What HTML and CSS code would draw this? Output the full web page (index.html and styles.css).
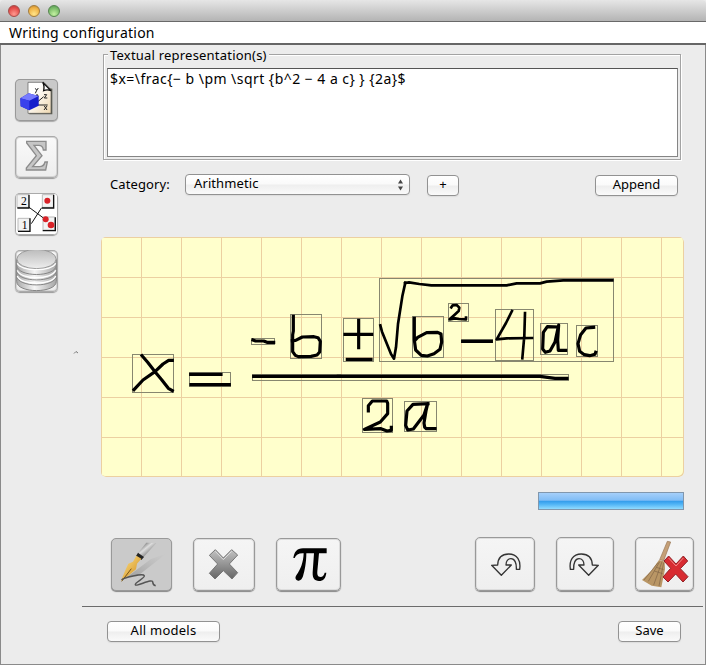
FILE: index.html
```html
<!DOCTYPE html>
<html lang="en">
<head>
<meta charset="utf-8">
<title>Writing configuration</title>
<link rel="stylesheet" href="styles.css">
</head>
<body>
<div class="window">
  <header class="titlebar"><i class="light red"></i><i class="light amber"></i><i class="light green"></i></header>
  <nav class="menubar"><span class="t-menu">Writing configuration</span></nav>
  <div class="content">
    <aside class="sidebar">
      <button class="side active" aria-label="Formula">
        <svg width="43" height="42" viewBox="0 0 129 126">
          <defs><linearGradient id="paper" x1="0" y1="0" x2="1" y2="1"><stop offset=".3" stop-color="#fff"/><stop offset="1" stop-color="#efd8b0"/></linearGradient></defs>
          <path d="M43 16v90h69V29" fill="#443" opacity=".8"/>
          <path d="M39 10h48l21 22v71H39z" fill="url(#paper)" stroke="#555" stroke-width="2"/>
          <path d="M83 10c5 8 5 15 3 25 7-3 14-3 22 0z" fill="#fff" stroke="#111" stroke-width="4"/>
          <path d="M66 78V48m0 30h32M66 70l20-17m-23-1 3-6 4 6M61 28l4 6 5-7m-5 7-4 9M87 47h8l-7 10h9M88 81l8 12m0-12-9 12" fill="none" stroke="#222" stroke-width="3"/>
          <path d="M16 58l25-15 30 8v29L43 94 17 82z" fill="#171ecb"/><path d="M16 58l25-15 30 8-28 14z" fill="#777bff"/><path d="M16 58l27 7v29L17 82z" fill="#3941ec"/>
        </svg>
      </button>
      <button class="side" aria-label="Sum">
        <svg width="43" height="42" viewBox="0 0 129 126"><path d="M35 16h58v26h-8c-1-10-5-14-14-14H57l24 31-28 33h20c10 0 15-5 17-14h7l-5 24H34v-6l30-37-29-38z" fill="#c6c6c6" stroke="#8c8c8c" stroke-width="4"/></svg>
      </button>
      <button class="side" aria-label="Matching">
        <svg width="43" height="42" viewBox="0 0 129 126">
          <rect x="3" y="3" width="123" height="120" rx="9" fill="#fff"/>
          <g fill="#f3f3f3" stroke="#bbb" stroke-width="3"><path d="M6 5h35v38H6zM9 76h35v38H9zM82 5h33v38H82zM84 72h35v39H84z"/></g>
          <g fill="none" stroke="#111" stroke-width="4"><path d="M42 5v40H7m38 31v39H9M116 5v40H81m40 28v40H83"/></g>
          <path d="M41 42l43 32M49 92l31-48" stroke="#111" stroke-width="3"/>
          <g fill="#d92228"><circle cx="97" cy="23" r="9"/><circle cx="92" cy="79" r="9"/><circle cx="108" cy="96" r="10"/></g>
          <text x="18" y="37" class="digit">2</text><text x="20" y="107" class="digit">1</text>
        </svg>
      </button>
      <button class="side" aria-label="Database">
        <svg width="43" height="42" viewBox="0 0 129 126">
          <defs><linearGradient id="disk" x1="0" x2="1"><stop stop-color="#aaa"/><stop offset=".45" stop-color="#f5f5f5"/><stop offset="1" stop-color="#a6a6a6"/></linearGradient>
          <linearGradient id="lid" x1="0" y1="0" x2="0" y2="1"><stop stop-color="#bbb"/><stop offset="1" stop-color="#eee"/></linearGradient></defs>
          <g fill="url(#disk)" stroke="#858585" stroke-width="3"><path d="M5 72v22c0 37 119 37 119 0V72z"/><path d="M5 55v22c0 37 119 37 119 0V55z"/><path d="M5 40v22c0 37 119 37 119 0V40z"/><path d="M5 28v17c0 38 119 38 119 0V28z"/></g>
          <ellipse cx="64.500" cy="27" rx="59" ry="29" fill="url(#lid)" stroke="#999" stroke-width="3"/>
          <path d="M7 40c9 25 105 25 115 0M7 61c9 29 105 29 115 0M7 78c9 29 105 29 115 0" fill="none" stroke="#fff" stroke-width="4"/>
        </svg>
      </button>
      <svg class="collapse" width="6" height="5" viewBox="0 0 6 5"><path d="M1 3.500l2-2 2 1.500" fill="none" stroke="#777"/></svg>
    </aside>
    <main class="main">
      <section class="group">
        <h2 class="legend"><span class="t-legend">Textual representation(s)</span></h2>
        <div class="source"><span class="t-source">$x=\frac{− b \pm \sqrt {b^2 − 4 a c} } {2a}$</span></div>
      </section>
      <div class="category">
        <label>Category:</label>
        <button class="select"><span class="t-arith">Arithmetic</span><svg width="7" height="12" viewBox="0 0 7 12"><path d="M1 4.500 3.500.500 6 4.500zM1 7.500l2.500 4 2.500-4z" fill="#444"/></svg></button>
        <button class="push plus">+</button>
        <button class="push append"><span>Append</span></button>
      </div>
      <div class="paper">
        <svg width="583" height="240" viewBox="101 237 583 240">
          <g fill="none" stroke="#87876f" stroke-width="1">
            <rect x="132.500" y="354.500" width="41" height="38"/><rect x="189.500" y="372.500" width="41" height="14"/><rect x="251.500" y="338.500" width="23" height="6"/><rect x="290.500" y="314.500" width="31" height="44"/><rect x="343.500" y="318.500" width="30" height="43"/><rect x="379.500" y="278.500" width="234" height="83"/><rect x="412.500" y="316.500" width="31" height="41"/><rect x="448.500" y="303.500" width="20" height="18"/><rect x="461.500" y="339.500" width="31" height="3"/><rect x="495.500" y="309.500" width="38" height="51"/><rect x="540.500" y="323.500" width="27" height="31"/><rect x="576.500" y="325.500" width="21" height="31"/><rect x="252.500" y="374.500" width="316" height="6"/><rect x="362.500" y="398.500" width="30" height="34"/><rect x="404.500" y="401.500" width="32" height="30"/>
          </g>
          <g class="ink" transform="translate(95 230) scale(.33333)">
            <path d="M141 377l17 20 22 28 20 24 20 26 12 7M117 479l27-29 36-25 24-23 17-11h11"/>
            <path d="M287 433h91M288 464h115M474 330l8 3h24l10 4h20M476 439h259"/>
            <path d="M595 259v44l-2 11v51l8 11 9 4 38-1 18-4 8-9 2-32-7-11-12-3-35 1-20 10-10 1"/>
          </g>
          <g class="ink" transform="translate(340 260) scale(.33333)">
            <path d="M56 181v82M15 223h80M22 298h71"/>
            <path class="thin" d="M121 196l5 19 27 67 9 14 6-34 6-70 13-83 9-41"/>
            <path class="thin" d="M195 69l12-2 31 5 36 4H500l30-6h70l20-5 50-4h147"/>
            <path d="M223 175v65l4 30 17 16 18 2 20-7 18-13 5-22-2-24-10-5-33 1-27 14-8 9"/>
            <path class="thin" d="M334 142l4-6 12-1 8 8-2 10-12 11-15 14 16-3 12 2 21 1v-5"/>
            <path d="M368 244h86M-5 349H600l45 6h36"/>
            <path class="thin" d="M516 153l-18 36-28 49 30-3 76-1M555 159l-2 68-6 68"/>
            <path d="M655 201l-33-1-12 17-2 50 8 10 14-4 15-27 11-51-3 45 2 31h22"/>
            <path d="M761 202l-23 2-16 20-8 27 5 23 14 10 16 3 16-4 2-6"/>
            <path d="M85 453v-16l12-14h43l3 7v31l-22 25-48 22 50-2 18 7 13-2v-9"/>
            <path d="M264 431l-45 2-18 20-4 43 6 14 17-3 32-42 11-34-5 22-6 36 2 13 5 4h26"/>
          </g>
        </svg>
      </div>
      <div class="progress"></div>
      <div class="tools">
        <button class="tool pen active" aria-label="Write">
          <svg width="60" height="52" viewBox="0 0 180 156">
            <defs><linearGradient id="barrel" x1="0" y1="0" x2="1" y2="1"><stop stop-color="#222"/><stop offset=".4" stop-color="#ddd"/><stop offset="1" stop-color="#222"/></linearGradient><linearGradient id="nib" x1="0" y1="0" x2="1" y2="1"><stop stop-color="#ffe58b"/><stop offset="1" stop-color="#ce8818"/></linearGradient><linearGradient id="fade" x1="0" y1="1" x2="1" y2="0"><stop stop-color="#888" stop-opacity=".7"/><stop offset="1" stop-color="#aaa" stop-opacity="0"/></linearGradient></defs>
            <path d="M42 116l75-56 45-16-80 63z" fill="url(#fade)"/>
            <path d="M78 42l25-31 30 1-40 44z" fill="url(#barrel)"/>
            <path d="M78 41l-6 10 16 12 8-9z" fill="#252525"/><path d="M73 50l-10 18-14 6-10 22-12 29 21-14 24-20 3-17 13-15z" fill="url(#nib)"/><path d="M29 127l29-38" stroke="#765318" stroke-width="3"/>
            <path d="M29 123c4-7 65-21 68-13 3 7-29 20-27 27 2 6 30-9 44-11 16-2 1 10 17 14" fill="none" stroke="#555" stroke-width="4.500"/>
          </svg>
        </button>
        <button class="tool remove" aria-label="Delete">
          <svg width="60" height="52" viewBox="0 0 180 156"><defs><linearGradient id="steel" x1="0" y1="0" x2="0" y2="1"><stop stop-color="#c2c2c2"/><stop offset="1" stop-color="#666"/></linearGradient></defs><path d="M64 32l24 25 25-25 18 16-25 27 25 26-17 19-26-25-25 25-17-17 25-28-25-26z" fill="url(#steel)" stroke="#777" stroke-width="3" stroke-linejoin="round"/><path d="M64 37l24 25 25-25" fill="none" stroke="#ddd" stroke-width="3"/></svg>
        </button>
        <button class="tool pi" aria-label="Pi">
          <svg width="62" height="52" viewBox="0 0 186 156"><path d="M46 57c3-17 10-29 29-29h71v15h-23l-5 54c-1 12 2 17 9 17 8 0 11-6 13-13h5c-2 17-9 25-22 25-14 0-20-9-19-26l4-57H85c0 27-5 53-10 69-3 9-8 14-15 13-7-1-10-9-5-16 13-18 21-39 22-66-14-1-23 4-27 14z" fill="#000"/></svg>
        </button>
        <button class="tool undo" aria-label="Undo">
          <svg width="58" height="53" viewBox="0 0 174 159"><path id="turn" d="M47 82l18-1c1-23 13-33 33-33 26 0 37 20 33 46h-10c1-19-5-32-16-32-9 0-15 8-15 19h16L76 112z" fill="#eee" stroke="#333" stroke-width="4" stroke-linejoin="round"/></svg>
        </button>
        <button class="tool redo" aria-label="Redo">
          <svg width="56" height="53" viewBox="0 0 168 159"><use href="#turn" transform="translate(171 0) scale(-1 1)"/></svg>
        </button>
        <button class="tool clear" aria-label="Clear">
          <svg width="57" height="53" viewBox="0 0 171 159">
            <path d="M94 10l10 2-21 56-12-3z" fill="#c5a077" stroke="#987554" stroke-width="2"/><path d="M69 66l17 5 1 23-11 54-29-5-29-17 28-28z" fill="#b99665"/><path d="M71 71l-34 59m41-59-25 70m30-67-14 70M66 74l-42 52M61 88l22 7m-28 4 25 8" stroke="#806345" stroke-width="2" fill="none"/>
            <path d="M98 54l22 24 22-24 13 15-22 23 23 24-15 16-22-24-23 24-15-15 23-26-20-22z" fill="#d82b31" stroke="#912024" stroke-width="3" stroke-linejoin="round"/><path d="M98 60l22 24 22-24" fill="none" stroke="#f18a8a" stroke-width="3"/>
          </svg>
        </button>
      </div>
      <footer class="footer"><button class="push models"><span>All models</span></button><button class="push save"><span>Save</span></button></footer>
    </main>
  </div>
</div>
</body>
</html>
```
FILE: styles.css
```css
* { box-sizing: border-box; }
body { margin: 0; background: #fff; font: 13px/18px "Noto Sans", sans-serif; color: #000; }
button { appearance: none; padding: 0; margin: 0; font: inherit; color: #000; }
svg { display: block; flex: none; }
.window { width: 706px; height: 665px; display: flex; flex-direction: column; background: #ececec; overflow: hidden; }
.titlebar { height: 22px; display: flex; gap: 8px; padding: 5px 8px; background: linear-gradient(#e6e6e6, #b4b4b4); border-bottom: 1px solid #696969; border-radius: 4px 4px 0 0; flex: none; }
.light { width: 12px; height: 12px; border-radius: 50%; border: 1px solid #777; }
.red { background: radial-gradient(circle at 50% 80%, #ff9a90, #e34b48 65%, #b63c3b); border-color: #a54d4a; }
.amber { background: radial-gradient(circle at 50% 80%, #ffe58a, #eeb043 65%, #bd812c); border-color: #a37c3d; }
.green { background: radial-gradient(circle at 50% 80%, #c4f1a2, #78ba67 65%, #519252); border-color: #56854f; }
.menubar { height: 23px; flex: none; background: #fff; border-bottom: 2px solid #666; padding: 2px 0 0 9px; font-size: 14px; letter-spacing: .25px; }
.content { flex: 1; min-height: 0; display: flex; border: solid #8a8a8a; border-width: 0 1px 1px; }
.sidebar { width: 81px; padding: 34px 0 0 14px; display: flex; flex-direction: column; gap: 15px; }
.side { width: 43px; height: 42px; border: 0; border-radius: 5px; overflow: hidden; background: linear-gradient(#fafafa, #ededed); box-shadow: inset 0 0 0 1px #aaa, inset 0 0 0 2px #d5d5d5, 0 1px 1px #999; flex: none; }
.side.active { background: #c9c9c9; box-shadow: inset 0 0 0 1px #999, 0 1px 1px #aaa; }
.digit { font: 35px "Liberation Serif", serif; }
.collapse { margin: 43px 0 0 58px; }
.main { flex: 1; display: flex; flex-direction: column; min-width: 0; }
.group { margin: 9px 0 0 21px; width: 578px; height: 106px; border: 1px solid #a3a3a3; box-shadow: 1px 1px #fff, inset 1px 1px #fff; padding: 0 2px 2px 3px; display: flex; flex-direction: column; }
.legend { align-self: flex-start; margin: -9px 0 0 1px; padding: 0 2px; height: 22px; background: #ececec; font-weight: 400; font-size: 13px; line-height: 18px; letter-spacing: .21px; }
.source { height: 89px; border: 1px solid #858585; border-top-color: #555; background: #fff; padding: 1px 2px; font-size: 14px; letter-spacing: .46px; white-space: pre; }
.category { display: flex; align-items: flex-start; height: 77px; padding: 14px 0 0 28px; flex: none; }
.category label { width: 75px; padding-top: 1px; letter-spacing: .1px; }
.select, .push { height: 21px; border: 1px solid #929292; border-radius: 4px; background: linear-gradient(#fff, #fafafa 48%, #eee 52%, #fafafa); box-shadow: 0 1px 1px #ddd; line-height: 17px; }
.push { padding-bottom: 2px; }
.select { width: 225px; padding: 0 5px 2px 8px; display: flex; align-items: center; justify-content: space-between; letter-spacing: .1px; }
.select svg { margin-top: 2px; }
.plus { width: 32px; margin: 1px 0 0 17px; }
.append { width: 83px; margin: 1px 0 0 136px; }
.paper { margin: 0 0 0 19px; width: 583px; height: 240px; flex: none; border-radius: 5px; background-color: #ffffcc; background-image: linear-gradient(90deg, #ecd0a1 1px, transparent 1px), linear-gradient(#ecd0a1 1px, transparent 1px); background-size: 40px 40px; box-shadow: inset -1px -1px #ecd0a1; overflow: hidden; }
.ink { fill: none; stroke: #000; stroke-width: 9.5; stroke-linejoin: round; stroke-linecap: square; }
.thin { stroke-width: 8; }
.progress { width: 146px; height: 18px; margin: 15px 0 0 456px; flex: none; border: 1px solid #8197ad; background: linear-gradient(#a5cffa, #81bdf6 45%, #359eec 52%, #50b4f6 70%, #91dbff); }
.tools { height: 97px; flex: none; padding: 27px 0 0 29px; display: flex; align-items: flex-start; border-bottom: 1px solid #6b6b6b; margin-right: 2px; }
.tool { height: 54px; flex: none; border: 1px solid #999; border-radius: 5px; background: linear-gradient(#f5f5f5, #efefef); box-shadow: 0 1px 1px #888, inset 0 0 0 1px #ddd; display: flex; justify-content: center; align-items: center; }
.tool.active { background: #cacaca; box-shadow: 0 1px 1px #888; }
.pen, .remove, .pi { height: 53px; margin-top: 1px; }
.pen { width: 61px; }
.remove { width: 62px; margin-left: 21px; }
.pi { width: 65px; margin-left: 21px; }
.undo { width: 60px; margin-left: 134px; }
.redo { width: 58px; margin-left: 21px; }
.clear { width: 59px; margin-left: 21px; }
.footer { display: flex; justify-content: space-between; padding: 14px 24px 0 25px; }
.models { width: 113px; letter-spacing: .25px; }
.save { width: 63px; }
```
